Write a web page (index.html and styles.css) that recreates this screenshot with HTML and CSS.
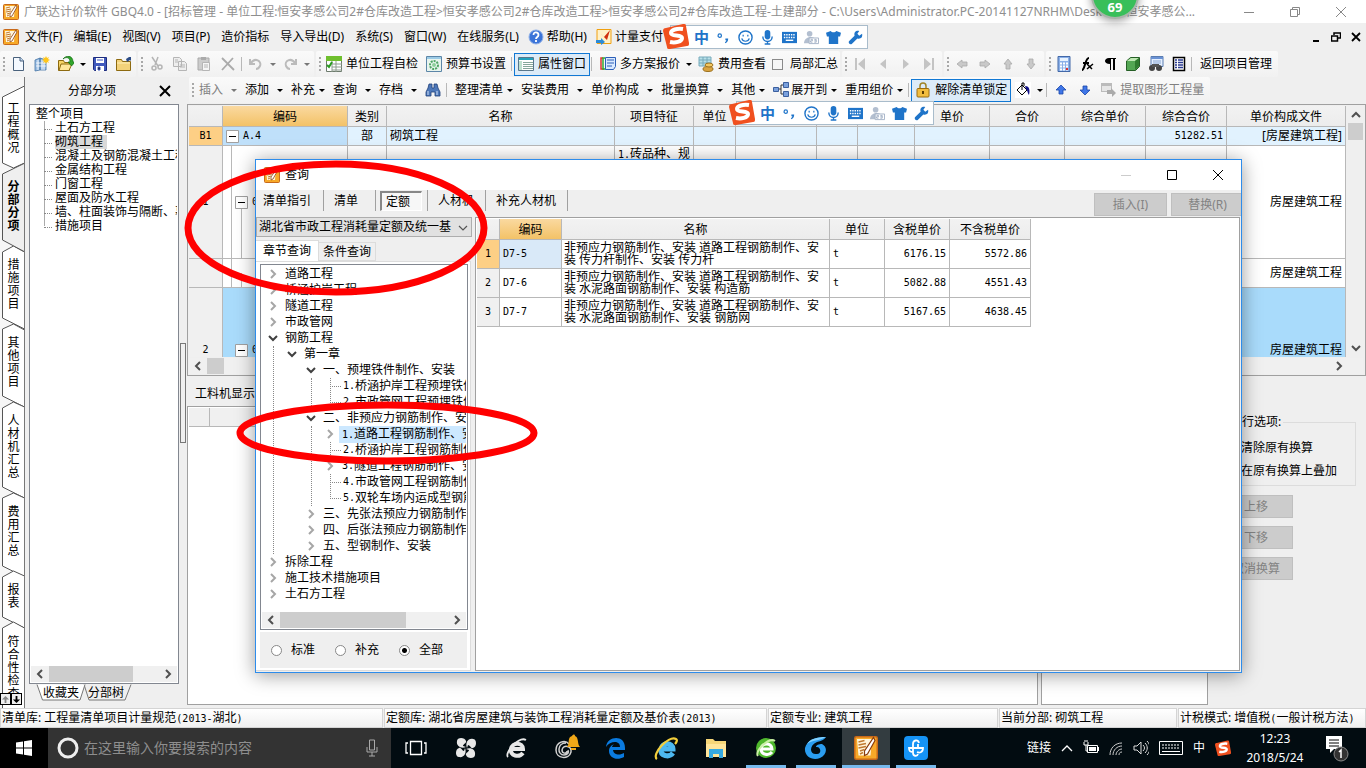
FILE: index.html
```html
<!DOCTYPE html>
<html lang="zh-CN">
<head>
<meta charset="utf-8">
<title>广联达计价软件 GBQ4.0</title>
<link rel="stylesheet" href="styles.css">
</head>
<body>
<svg class="defs" aria-hidden="true">
  <symbol id="app" viewBox="0 0 16 16"><rect x=".5" y=".5" width="15" height="15" rx="1" fill="#f7a928" stroke="#c8691a"/><path d="M2 2h10l-1 11H3z" fill="#fff6dc"/><path d="M3 4l4-1M3 6l5-1M3 8l5-1M4 10l3-1M4 12l2-1" fill="none" stroke="#c07a30"/><path d="M13 1l1 2-5 9-2 1 0-3z" fill="#fff" stroke="#8a3d0c" stroke-width=".8"/></symbol>
  <symbol id="doc" viewBox="0 0 16 16"><path d="M3.500 1.500h7l3 3v10h-10z" fill="#f4f9ff" stroke="#49617c"/><path d="M10 1v4h4" fill="#c5daf0" stroke="#49617c"/></symbol>
  <symbol id="build" viewBox="0 0 16 16"><path d="M1 4l5-2v12l-5 1zM6 2l6 2v10H6z" fill="#9cbfe4" stroke="#4574a5" stroke-width=".8"/><path d="M2 7h10M2 10h10M4 4v10M8 4v10M10 4v10" stroke="#fff" stroke-width=".8"/><path d="M12 0l1 2 2-1-1 2 2 1-2 1 1 2-2-1-1 2-1-2-2 1 1-2-2-1 2-1-1-2 2 1z" fill="#ffc61a"/></symbol>
  <symbol id="open" viewBox="0 0 16 16"><path d="M0.500 4.500h5l1 2h5v8h-11z" fill="#f6d365" stroke="#8d6a10"/><path d="M3 8h11l-3 6.500H1z" fill="#ffe79a" stroke="#8d6a10"/><path d="M5 3c4-3 7-1 7 3h-2l3.500 4L17 6h-2C15-1 8-1 5 3z" fill="#31a52c" stroke="#116a12" stroke-width=".7"/></symbol>
  <symbol id="save" viewBox="0 0 16 16"><path d="M1.500 1.500h13v13h-12l-1-1z" fill="#4059bd" stroke="#1d2c7f"/><path d="M4 2h8v5H4zM4 10h8v5H4z" fill="#fff"/><path d="M5 4h6M6 11h2v3H6z" stroke="#4059bd"/></symbol>
  <symbol id="folder" viewBox="0 0 16 16"><path d="M.5 3.500h5l1 2h8v9H.5z" fill="#f3d27a" stroke="#8d6a10"/><path d="M1 7h13" stroke="#fff0b8"/><path d="M10 3l3-2h2v4l-1-1-3 2z" fill="#2c4c86"/></symbol>
  <symbol id="cut" viewBox="0 0 16 16"><path d="M4 1l6 9M10 1L7 9" stroke="#b5b5b5" stroke-width="1.500"/><circle cx="6" cy="12" r="2" fill="none" stroke="#b5b5b5" stroke-width="1.500"/><circle cx="12" cy="11" r="2" fill="none" stroke="#b5b5b5" stroke-width="1.500"/></symbol>
  <symbol id="copy" viewBox="0 0 16 16"><path d="M1.500 1.500h6l2 2v7h-8zM6.500 5.500h6l2 2v7h-8z" fill="#eee" stroke="#b5b5b5"/><path d="M8 9h5M8 11h5M3 4h3M3 6h3" stroke="#b5b5b5"/></symbol>
  <symbol id="paste" viewBox="0 0 16 16"><path d="M2 2h11v12H2z" fill="#ccc" stroke="#aaa"/><path d="M5 1h5v3H5z" fill="#aaa"/><path d="M6.500 6.500h7v8h-7z" fill="#f5f5f5" stroke="#b5b5b5"/><path d="M8 9h4M8 11h4" stroke="#b5b5b5"/></symbol>
  <symbol id="del" viewBox="0 0 16 16"><path d="M2 2l12 12M13 2L2 14" stroke="#aaa" stroke-width="1.800"/></symbol>
  <symbol id="undo" viewBox="0 0 16 16"><path d="M2 3v5h5M3 7c4-6 11-2 9 3-1 2-3 3-4 3" fill="none" stroke="#bbb" stroke-width="2"/></symbol>
  <symbol id="table" viewBox="0 0 16 16"><path d="M.5 .5h15v15H.5z" fill="#fff" stroke="#6d7b6d"/><path d="M0 0h16v5H0z" fill="#6fbf2e"/><path d="M6 8h10M6 11h10M6 14h10M10 5v11M6 5v11" stroke="#8e9b8e"/><path d="M1 9l2 2 3-5" fill="none" stroke="#2a9a20" stroke-width="2"/></symbol>
  <symbol id="gear" viewBox="0 0 16 16"><path d="M.5 .5h15v15H.5z" fill="#e8f4ee" stroke="#5c86a8"/><path d="M1 1h14v2H1z" fill="#9ccbe6"/><circle cx="8" cy="9" r="4" fill="none" stroke="#4fa564" stroke-width="2" stroke-dasharray="2 1"/><circle cx="8" cy="9" r="2" fill="#8fd09c"/></symbol>
  <symbol id="prop" viewBox="0 0 16 16"><path d="M.5 1.500h15v13H.5z" fill="#fff" stroke="#59778c"/><path d="M1 2h14v2H1z" fill="#22a1bd"/><path d="M1 5h3v9H1z" fill="#bfe0cf"/><path d="M5 6.500h10M5 8.500h10M5 10.500h10M5 12.500h10" stroke="#86a79b"/></symbol>
  <symbol id="multi" viewBox="0 0 16 16"><path d="M3 2H1v11h3" fill="none" stroke="#d33" stroke-width="1.500"/><path d="M5 2H3v11h3" fill="none" stroke="#3a3" stroke-width="1.500"/><path d="M5.500 1.500h10v9l-2 3h-8z" fill="#d9e9ff" stroke="#2b5fb8"/><path d="M7 4h7M7 7h7M7 10h5" stroke="#2b5fb8"/></symbol>
  <symbol id="fee" viewBox="0 0 16 16"><path d="M1 1h12v9H1z" fill="#b8e0e8" stroke="#7ab"/><path d="M1 4h12M1 7h12M5 1v9M9 1v9" stroke="#7ab"/><ellipse cx="10" cy="13" rx="5" ry="2.500" fill="#d9a441" stroke="#9a6f1c"/><ellipse cx="11" cy="9" rx="4" ry="2" fill="#f2c762" stroke="#9a6f1c"/></symbol>
  <symbol id="first" viewBox="0 0 16 16"><path d="M3 2h2v12H3zM13 2v12L6 8z" fill="#c4c4c4"/></symbol>
  <symbol id="prev" viewBox="0 0 16 16"><path d="M11 3v10L5 8z" fill="#c4c4c4"/></symbol>
  <symbol id="arr" viewBox="0 0 16 16"><path d="M3 8l5-4v2h5v4H8v2z" fill="#c9c9c9" stroke="#aaa" stroke-width=".8"/></symbol>
  <symbol id="barr" viewBox="0 0 16 16"><path d="M8 3l5 5h-3v4H6V8H3z" fill="#3f76e8" stroke="#1b46a8" stroke-width=".8"/></symbol>
  <symbol id="calc" viewBox="0 0 16 16"><path d="M2 .5h12v15H2z" fill="#8bb0e8" stroke="#4268a8"/><path d="M4 2h8v3H4z" fill="#e8f3ff"/><path d="M4 7.500h8M4 10.500h8M4 13.500h8" stroke="#fff" stroke-width="2" stroke-dasharray="2 1"/><path d="M10 13h2" stroke="#d33" stroke-width="2"/></symbol>
  <symbol id="fx" viewBox="0 0 16 16"><path d="M3 14c3 0 3-12 7-12M4 7h6" fill="none" stroke="#000" stroke-width="2"/><path d="M8 8l5 5M14 8l-6 5" fill="none" stroke="#000" stroke-width="1.500"/></symbol>
  <symbol id="para" viewBox="0 0 16 16"><path d="M8 8C1 8 2 2 7 2h7v1h-1v11h-2V3H9v11H8z" fill="#000"/></symbol>
  <symbol id="cube" viewBox="0 0 16 16"><path d="M1.500 5l4-3.500h9v9l-4 4h-9z" fill="#53a653" stroke="#265f26"/><path d="M2 5l4-3h8l-4 3z" fill="#bfe8b4"/><path d="M10 5l4-3v8l-4 4z" fill="#2f7b2f"/></symbol>
  <symbol id="find" viewBox="0 0 16 16"><path d="M3 .5h12v10H3z" fill="#e4efff" stroke="#5a7cb0"/><path d="M3 1h12v2H3z" fill="#6a92d4"/><path d="M5 5h8M5 7h8" stroke="#8aa6d0"/><circle cx="4" cy="12" r="3" fill="#444"/><circle cx="11" cy="12" r="3" fill="#444"/><path d="M4 8h7v3H4z" fill="#555"/></symbol>
  <symbol id="list" viewBox="0 0 16 16"><path d="M2.500 1.500h11v13h-11z" fill="#fff" stroke="#000" stroke-width="1.500"/><path d="M4 4h2M7 4h5M4 6.500h2M7 6.500h5M4 9h2M7 9h5M4 11.500h2M7 11.500h5" stroke="#2a3a90" stroke-width="1.300"/></symbol>
  <symbol id="bino" viewBox="0 0 16 16"><path d="M4 2h3v4h2V2h3l1 4 2 4v4h-5v-4H6v4H1v-4l2-4z" fill="#4c77b8" stroke="#1f3f78" stroke-width=".8"/><path d="M3 9v4M12 9v4" stroke="#cfe0f8"/></symbol>
  <symbol id="expand" viewBox="0 0 16 16"><path d="M.5 5.500h5v4h-5zM10.500 .5h5v5h-5zM10.500 9.500h5v5h-5z" fill="#7aa0dc" stroke="#3b5f9e"/><path d="M6 7h2M10 3H8v9h2" fill="none" stroke="#333"/></symbol>
  <symbol id="lock" viewBox="0 0 16 16"><path d="M5 7V4c0-4 6-4 6 0v3" fill="none" stroke="#a08428" stroke-width="1.500"/><rect x="2" y="6.500" width="12" height="8.500" rx="1" fill="#f2bd3e" stroke="#9a6c10"/><path d="M8 9v3" stroke="#5a3c00" stroke-width="2"/></symbol>
  <symbol id="bucket" viewBox="0 0 16 16"><path d="M0 0h16v16H0z" fill="#fff"/><path d="M7 3l5 5-5 5-5-5z" fill="#fff" stroke="#000"/><path d="M7 8V1h2v3" fill="none" stroke="#000"/><path d="M10 4c5 0 5 5 4 9-2-3-1-4-3-6z" fill="#14148c"/></symbol>
  <symbol id="extract" viewBox="0 0 16 16"><path d="M0 1h11v9H0z" fill="#bbb"/><path d="M1 4h9v5H1z" fill="#e6e6e6"/><path d="M6 8h4V6l5 5-4 4v-3H6z" fill="#aaa"/></symbol>
  <symbol id="sogou" viewBox="0 0 26 26"><path d="M3 5l17-4c2 0 3 0 3 2l3 17c0 2 0 3-2 3L7 26c-2 0-3 0-3-2L0 8c0-2 1-3 3-3z" fill="#f0501f"/><path d="M20 6c-6-1-12 1-12 4 0 4 11 1 11 5 0 4-7 5-12 4" fill="none" stroke="#fff" stroke-width="4"/></symbol>
  <symbol id="punc" viewBox="0 0 16 16"><circle cx="4" cy="6" r="1.800" fill="none" stroke="#1f74c9" stroke-width="1.300"/><path d="M10 9h3c0 3-1 4-3 5l-.5-1c1-.5 1.500-1 1.500-2h-1z" fill="#1f74c9"/></symbol>
  <symbol id="smile" viewBox="0 0 16 16"><circle cx="8" cy="8" r="7" fill="none" stroke="#1f74c9" stroke-width="1.500"/><path d="M5.500 5v2M10.500 5v2M4 9c1 4 7 4 8 0" fill="none" stroke="#1f74c9" stroke-width="1.300"/></symbol>
  <symbol id="mic" viewBox="0 0 16 16"><rect x="5" y="0" width="6" height="10" rx="3" fill="#1f74c9"/><path d="M3 7c0 7 10 7 10 0M8 12v3M5 15h6" fill="none" stroke="#1f74c9" stroke-width="1.500"/></symbol>
  <symbol id="kb" viewBox="0 0 16 16"><path d="M0 2h16v12H0z" fill="#1f74c9"/><path d="M2 5h12M2 8h12" stroke="#fff" stroke-width="1.500" stroke-dasharray="1.500 1"/><path d="M4 11h8" stroke="#fff" stroke-width="1.500"/></symbol>
  <symbol id="person" viewBox="0 0 16 16"><circle cx="6" cy="4" r="3" fill="#b3bfd0"/><path d="M0 14c0-8 12-8 12-4v4z" fill="#b3bfd0"/><path d="M5.500 8.500h10v6h-10z" fill="#fff" stroke="#a4b2c6"/><path d="M7 10h2v1.500H7V13h2M11 10h2v3h-2M11 11.500h2" fill="none" stroke="#8e9fb8" stroke-width=".8"/></symbol>
  <symbol id="shirt" viewBox="0 0 16 16"><path d="M5 1c1 2 5 2 6 0l5 2-1 4h-2v8H3V7H1L0 3z" fill="#1f74c9"/></symbol>
  <symbol id="wrench" viewBox="0 0 16 16"><path d="M1 12l6-6c-1-4 2-6 5-5L10 4l2 2 3-2c1 4-2 6-5 5l-6 6c-2 1-4-1-3-3z" fill="#1f74c9"/></symbol>
  <symbol id="minus" viewBox="0 0 13 13"><path d="M.5 .5h12v12H.5z" fill="#fff" stroke="#a0a0a0"/><path d="M3 6.500h7" stroke="#000"/></symbol>
  <symbol id="cl" viewBox="0 0 8 10"><path d="M6 1L2 5l4 4" fill="none" stroke="#505050" stroke-width="2"/></symbol>
  <symbol id="cr" viewBox="0 0 8 10"><path d="M2 1l4 4-4 4" fill="none" stroke="currentColor" stroke-width="2"/></symbol>
  <symbol id="cd" viewBox="0 0 10 8"><path d="M1 2l4 4 4-4" fill="none" stroke="currentColor" stroke-width="2"/></symbol>
  <symbol id="cthin" viewBox="0 0 10 8"><path d="M1 2l4 4 4-4" fill="none" stroke="#555" stroke-width="1.200"/></symbol>
</svg>

<div class="desktop">
<header class="titlebar">
  <svg class="i"><use href="#app"/></svg>
  <h1>广联达计价软件 GBQ4.0 - [招标管理 - 单位工程:恒安孝感公司2#仓库改造工程&gt;恒安孝感公司2#仓库改造工程&gt;恒安孝感公司2#仓库改造工程-土建部分 - C:\Users\Administrator.PC-20141127NRHM\Desktop\恒安孝感公...</h1>
  <div class="winbtns">
    <button aria-label="最小化"><svg viewBox="0 0 10 10"><path d="M0 5.500h10" stroke="#888"/></svg></button>
    <button aria-label="还原"><svg viewBox="0 0 10 10"><path d="M.5 2.500h7v7h-7zM2.500 2V.5h7v7H8" fill="none" stroke="#888"/></svg></button>
    <button aria-label="关闭"><svg viewBox="0 0 10 10"><path d="M0 0l10 10M10 0L0 10" stroke="#888"/></svg></button>
  </div>
</header>

<nav class="menubar">
  <svg class="i"><use href="#app"/></svg>
  <button>文件(F)</button><button>编辑(E)</button><button>视图(V)</button><button>项目(P)</button><button>造价指标</button><button>导入导出(D)</button><button>系统(S)</button><button>窗口(W)</button><button>在线服务(L)</button>
  <button class="with-i"><svg class="i" viewBox="0 0 16 16"><circle cx="8" cy="8" r="7" fill="#3b74d8" stroke="#8fb0e8"/><path d="M5.500 6c0-4 5-3 5 0 0 2-2.500 2-2.500 4M8 11v2" fill="none" stroke="#fff" stroke-width="1.800"/></svg>帮助(H)</button>
  <button class="with-i"><svg class="i" viewBox="0 0 16 16"><path d="M1 .5h14v14H1z" fill="#fff1c8" stroke="#f0a010"/><path d="M4 4l4 4 6-7-3 10z" fill="#d03010"/><path d="M0 11h5V9l4 4-4 3v-2H0z" fill="#2b8bd8"/></svg>计量支付</button>
  <div class="mdi">
    <button aria-label="最小化窗口"><svg viewBox="0 0 10 10"><path d="M2 9h6" stroke="#000" stroke-width="2"/></svg></button>
    <button aria-label="还原窗口"><svg viewBox="0 0 10 10"><path d="M.5 4h6v5h-6zM3 3V1h6.500v5H7" fill="none" stroke="#000" stroke-width="1.500"/></svg></button>
    <button aria-label="关闭窗口"><svg viewBox="0 0 10 10"><path d="M1 1l8 8M9 1L1 9" stroke="#000" stroke-width="1.800"/></svg></button>
  </div>
</nav>

<div class="toolrow">
  <div class="group flush"><i class="grip"></i>
    <button class="ib" aria-label="新建"><svg class="i"><use href="#doc"/></svg></button>
    <button class="ib" aria-label="新建项目"><svg class="i"><use href="#build"/></svg></button>
    <button class="ib" aria-label="打开"><svg class="i"><use href="#open"/></svg></button>
    <button class="dd" aria-label="打开选项"></button>
    <button class="ib" aria-label="保存"><svg class="i"><use href="#save"/></svg></button>
    <button class="ib" aria-label="目录"><svg class="i"><use href="#folder"/></svg></button>
  </div>
  <div class="group"><i class="grip"></i>
    <button class="ib" aria-label="剪切"><svg class="i"><use href="#cut"/></svg></button>
    <button class="ib" aria-label="复制"><svg class="i"><use href="#copy"/></svg></button>
    <button class="ib" aria-label="粘贴"><svg class="i"><use href="#paste"/></svg></button>
    <button class="ib" aria-label="删除"><svg class="i"><use href="#del"/></svg></button>
    <i class="sep"></i>
    <button class="ib" aria-label="撤销"><svg class="i"><use href="#undo"/></svg></button>
    <button class="dd dim" aria-label="撤销选项"></button>
    <button class="ib" aria-label="重做"><svg class="i flip"><use href="#undo"/></svg></button>
    <button class="dd dim" aria-label="重做选项"></button>
  </div>
  <div class="group flush"><i class="grip"></i>
    <button class="tb"><svg class="i"><use href="#table"/></svg>单位工程自检</button>
    <button class="tb"><svg class="i"><use href="#gear"/></svg>预算书设置</button>
    <i class="sep"></i>
    <button class="tb on"><svg class="i"><use href="#prop"/></svg>属性窗口</button>
    <i class="sep wide"></i>
    <button class="tb"><svg class="i"><use href="#multi"/></svg>多方案报价</button>
    <button class="dd" aria-label="报价选项"></button>
    <button class="tb"><svg class="i"><use href="#fee"/></svg>费用查看</button>
    <label class="check"><input type="checkbox">局部汇总</label>
  </div>
  <div class="group narrow"><i class="grip"></i>
    <button class="ib" aria-label="首条"><svg class="i"><use href="#first"/></svg></button>
    <button class="ib" aria-label="上一条"><svg class="i"><use href="#prev"/></svg></button>
    <button class="ib" aria-label="下一条"><svg class="i flip"><use href="#prev"/></svg></button>
    <button class="ib" aria-label="末条"><svg class="i flip"><use href="#first"/></svg></button>
  </div>
  <div class="group narrow"><i class="grip"></i>
    <button class="ib" aria-label="左移"><svg class="i"><use href="#arr"/></svg></button>
    <button class="ib" aria-label="右移"><svg class="i flip"><use href="#arr"/></svg></button>
    <button class="ib" aria-label="上升"><svg class="i r90"><use href="#arr"/></svg></button>
    <button class="ib" aria-label="下降"><svg class="i r270"><use href="#arr"/></svg></button>
  </div>
  <div class="group narrow"><i class="grip"></i>
    <button class="ib" aria-label="计算器"><svg class="i"><use href="#calc"/></svg></button>
    <button class="ib" aria-label="函数"><svg class="i"><use href="#fx"/></svg></button>
    <button class="ib" aria-label="特殊符号"><svg class="i"><use href="#para"/></svg></button>
    <button class="ib" aria-label="图元"><svg class="i"><use href="#cube"/></svg></button>
    <button class="ib" aria-label="查看"><svg class="i"><use href="#find"/></svg></button>
    <button class="ib" aria-label="列表"><svg class="i"><use href="#list"/></svg></button>
    <i class="sep wide"></i>
    <button class="tb">返回项目管理</button>
  </div>
</div>

<div class="main">
  <nav class="sidetabs">
    <svg class="outline" viewBox="0 0 25 631"><g fill="#fff" stroke="#555"><path d="M24.500 9L2.500 20v66l11 5 11-5z"/><path d="M13.500 169l-11 6v66l22 11V175z"/><path d="M13.500 247l-11 5v67l22 11V253z"/><path d="M13.500 325l-11 6v79l22 11V330z"/><path d="M13.500 416l-11 5v68l22 11V421z"/><path d="M13.500 494l-11 6v40l22 11V499z"/><path d="M13.500 545l-11 6v85h22v-85z"/></g><path d="M25 86L2.500 97v66L25 175z" fill="#efefef"/><path d="M25 86L2.500 97v66L25 175" fill="none" stroke="#555"/></svg>
    <button>工程概况</button><button class="sel">分部分项</button><button>措施项目</button><button>其他项目</button><button>人材机汇总</button><button>费用汇总</button><button>报表</button><button>符合性检查</button>
    <div class="spin"><button aria-label="向上滚动"><svg viewBox="0 0 10 10"><path d="M5 1l4 4H6v4H4V5H1z" fill="#888"/></svg></button><button aria-label="向下滚动"><svg viewBox="0 0 10 10"><path d="M5 9l4-4H6V1H4v4H1z" fill="#000"/></svg></button></div>
  </nav>

  <aside class="treepane">
    <div class="panehead"><h2>分部分项</h2><button aria-label="关闭面板"><svg viewBox="0 0 12 12"><path d="M1 1l10 10M11 1L1 11" stroke="#000" stroke-width="2"/></svg></button></div>
    <div class="treebox">
      <div class="tree">
        <div>整个项目</div>
        <ul><li>土石方工程</li><li><b>砌筑工程</b></li><li>混凝土及钢筋混凝土工程</li><li>金属结构工程</li><li>门窗工程</li><li>屋面及防水工程</li><li>墙、柱面装饰与隔断、幕墙工程</li><li>措施项目</li></ul>
      </div>
      <div class="hscroll"><svg><use href="#cl"/></svg><i class="t84"></i><svg><use href="#cr"/></svg></div>
    </div>
    <div class="foottabs"><svg viewBox="0 0 110 17"><path d="M55 .5l5 15.500h36L102 .5" fill="#efefef" stroke="#777"/><path d="M8 .5L13.500 16H51L56 .5" fill="#fff" stroke="#777"/></svg><button>收藏夹</button><button>分部树</button></div>
  </aside>

  <div class="splitter"><i></i></div>

  <section class="work">
    <div class="toolrow">
      <div class="group"><i class="grip"></i>
        <button class="td dim">插入</button><button class="td">添加</button><button class="td tight">补充</button><button class="td">查询</button><button class="td">存档</button>
        <button class="ib" aria-label="查找"><svg class="i"><use href="#bino"/></svg></button>
        <i class="sep wide"></i>
        <button class="td tight">整理清单</button><button class="td">安装费用</button><button class="td">单价构成</button><button class="td">批量换算</button><button class="td tight">其他</button>
        <button class="td tight"><svg class="i"><use href="#expand"/></svg>展开到</button><button class="td tight">重用组价</button>
        <i class="sep"></i>
        <button class="tb on"><svg class="i"><use href="#lock"/></svg>解除清单锁定</button>
        <button class="ib" aria-label="填充颜色"><svg class="i"><use href="#bucket"/></svg></button><button class="dd" aria-label="颜色选项"></button>
        <i class="sep"></i>
        <button class="ib" aria-label="上移一行"><svg class="i"><use href="#barr"/></svg></button>
        <button class="ib" aria-label="下移一行"><svg class="i r180"><use href="#barr"/></svg></button>
        <button class="tb last dim"><svg class="i"><use href="#extract"/></svg>提取图形工程量</button>
      </div>
    </div>

    <div class="gridbox">
      <div class="gridview">
        <table class="grid">
          <colgroup><col class="w34"><col class="w125"><col class="w39"><col class="w228"><col class="w79"><col class="w42"><col class="w81"><col class="w41"><col class="w57"><col class="w75"><col class="w75"><col class="w81"><col class="w81"><col></colgroup>
          <thead><tr><th></th><th class="hot">编码</th><th>类别</th><th>名称</th><th>项目特征</th><th>单位</th><th></th><th></th><th></th><th>单价</th><th>合价</th><th>综合单价</th><th>综合合价</th><th>单价构成文件</th></tr></thead>
          <tbody>
            <tr class="r19 lite"><th class="n hot2">B1</th><td class="n cell-sel"><svg class="m"><use href="#minus"/></svg>A.4</td><td class="c">部</td><td>砌筑工程</td><td></td><td></td><td></td><td></td><td></td><td></td><td></td><td></td><td class="n r">51282.51</td><td class="r">[房屋建筑工程]</td></tr>
            <tr class="r113"><th class="n">1</th><td class="n sub"><svg class="m"><use href="#minus"/></svg>0</td><td></td><td></td><td class="top"><span class="n">1.</span>砖品种、规</td><td></td><td></td><td></td><td></td><td></td><td></td><td></td><td></td><td class="r">房屋建筑工程</td></tr>
            <tr class="r29"><th></th><td class="sub"></td><td></td><td></td><td></td><td></td><td></td><td></td><td></td><td></td><td></td><td></td><td></td><td class="r">房屋建筑工程</td></tr>
            <tr class="r69 blue"><th class="n">2</th><td class="n sub2"><svg class="m"><use href="#minus"/></svg>0</td><td></td><td></td><td></td><td></td><td></td><td></td><td></td><td></td><td></td><td></td><td></td><td class="r">房屋建筑工程</td></tr>
          </tbody>
        </table>
        <div class="vscroll"><svg class="up"><use href="#cd"/></svg><i></i><svg><use href="#cd"/></svg></div>
      </div>
      <div class="hscroll"><svg><use href="#cl"/></svg><i class="t17"></i><svg><use href="#cr"/></svg></div>
    </div>

    <div class="lower">
      <div class="lowleft"><h2>工料机显示</h2><div class="resbox"><div class="reshead"><i></i></div></div></div>
      <div class="lowmid"></div>
      <form class="opts">
        <fieldset><legend>执行选项:</legend>
          <label><input type="radio" name="run">清除原有换算</label>
          <label><input type="radio" name="run">在原有换算上叠加</label>
        </fieldset>
        <button type="button" disabled>上移</button><button type="button" disabled>下移</button><button type="button" disabled>取消换算</button>
      </form>
    </div>
  </section>
</div>

<footer class="status">
  <span class="s383">清单库: 工程量清单项目计量规范<span class="n">(2013-</span>湖北<span class="n">)</span></span>
  <span class="s383">定额库: 湖北省房屋建筑与装饰工程消耗量定额及基价表<span class="n">(2013)</span></span>
  <span class="s230">定额专业: 建筑工程</span>
  <span class="s178">当前分部: 砌筑工程</span>
  <span class="rest">计税模式: 增值税<span class="n">(</span>一般计税方法<span class="n">)</span></span>
</footer>

<div class="taskbar">
  <button class="start" aria-label="开始"><svg viewBox="0 0 16 16"><path d="M0 2.500l7-1V7.500H0zM8 1.300L16 0v7.500H8zM0 8.500h7v6l-7-1zM8 8.500h8V16l-8-1.300z" fill="#fff"/></svg></button>
  <label class="search"><svg class="ring" viewBox="0 0 22 22"><circle cx="11" cy="11" r="9" fill="none" stroke="#eee" stroke-width="3"/></svg><input type="text" placeholder="在这里输入你要搜索的内容" aria-label="搜索"><svg class="smic" viewBox="0 0 12 18"><path d="M3.500 1h5v10h-5zM1 8v5h10V8M6 13v4M3 17h6" fill="none" stroke="#aaa"/></svg></label>
  <button aria-label="任务视图"><svg viewBox="0 0 24 24"><path d="M6.500 5.500h11v13h-11zM4 7H2v10h2M20 7h2v10h-2" fill="none" stroke="#fff" stroke-width="1.300"/></svg></button>
  <button aria-label="花瓣"><svg viewBox="0 0 24 24"><path d="M12 11C7 13 2 10 3 5c0-4 8-4 9 0 1 2-3 3-3 5M13 12c-2-5 1-10 6-9 4 0 4 8 0 9-2 1-3-3-5-3M12 13c5-2 10 1 9 6 0 4-8 4-9 0-1-2 3-3 3-5M11 12c2 5-1 10-6 9-4 0-4-8 0-9 2-1 3 3 5 3" fill="#e8e8e8"/></svg></button>
  <button aria-label="浏览器"><svg viewBox="0 0 24 24"><path d="M19 17c-4 5-13 3-12-4 1-7 12-7 12 0H8" fill="none" stroke="#e8e8e8" stroke-width="4"/><path d="M4 21C0 17 15 0 22 4" fill="none" stroke="#e8e8e8" stroke-width="1.800"/></svg></button>
  <button aria-label="提醒"><svg class="w28" viewBox="0 0 28 28"><path d="M17 10c-4-5-13-2-13 6 0 9 13 10 15 2 1-6-8-8-9-2 0 4 5 4 5 1M14 9c-9 0-9 12-2 12 4 0 5-3 4-5" fill="none" stroke="#d0d0d0" stroke-width="1.500"/><path d="M15 13c3-3 0-10 5-11 1-2 3-2 3 0 4 1 2 8 5 11zM19 14h5v2h-5z" fill="#f0a818"/></svg></button>
  <button aria-label="Edge"><svg viewBox="0 0 24 24"><path d="M2 11C3 0 21-2 21 12v2H9c1 6 8 5 11 3v4C13 25 5 22 5 15c0-4 3-6 5-7-2 2-2 3-2 3h8c0-7-10-6-14 0z" fill="#0a7be0"/></svg></button>
  <button aria-label="Internet Explorer"><svg viewBox="0 0 24 24"><path d="M19 17c-4 5-13 3-12-4 1-7 12-7 12 0H8" fill="none" stroke="#4db8f0" stroke-width="5"/><path d="M3 23C-3 19 14-1 22 3c2 1 0 4-1 5" fill="none" stroke="#f3cf3c" stroke-width="2.200"/></svg></button>
  <button aria-label="文件资源管理器"><svg viewBox="0 0 24 24"><path d="M2 3h7l2 2h11v16H2z" fill="#f6d678"/><path d="M2 8h20v13H2z" fill="#ffe59a"/><path d="M5 13h14v9h-4v-4H9v4H5z" fill="#36a9e0"/></svg></button>
  <button class="run" aria-label="安全浏览器"><svg viewBox="0 0 24 24"><circle cx="12" cy="12" r="10" fill="#4fb82d"/><path d="M18 16c-3 4-11 3-11-3s11-7 11 0H8" fill="none" stroke="#fff" stroke-width="3"/><path d="M4 20C0 15 15 1 21 5" fill="none" stroke="#c9f0a4" stroke-width="2"/></svg></button>
  <button class="run" aria-label="广联达"><svg viewBox="0 0 24 24"><path d="M22 1C12 1 3 4 1 12c-1 9 8 13 15 10 7-3 8-11 2-14-3 0-6 1-6 3 5-1 6 7 1 7-8 1-8-9 0-12 4-1 7-2 9-5z" fill="#2a9df0"/><path d="M22 1C12 1 6 3 3 8c5-4 12-3 19-7z" fill="#7fd0ff"/></svg></button>
  <button class="run active" aria-label="计价软件"><svg><use href="#app"/></svg></button>
  <button class="run" aria-label="云助手"><svg viewBox="0 0 24 24"><rect width="24" height="24" rx="4" fill="#1593f5"/><path d="M15 7c-1-4-6-3-6 1v9c0 3 4 4 5 1M9 12H5c0 4 2 4 4 4M7 12h12c0 5-4 5-6 4M14 8v4" fill="none" stroke="#fff" stroke-width="1.800"/></svg></button>
  <div class="tray">
    <span>链接</span>
    <svg viewBox="0 0 12 16"><path d="M1 11l5-5 5 5" fill="none" stroke="#fff" stroke-width="1.300"/></svg>
    <svg class="w16" viewBox="0 0 16 16"><path d="M4.500 5.500h10v7h-10zM15.500 7v4M1 2v3h4V2M3 5v6h2M2 0v2M4 0v2" fill="none" stroke="#fff"/><path d="M6 7h7v4H6z" fill="#fff"/></svg>
    <svg class="w14" viewBox="0 0 14 16"><path d="M1 15C1 8 6 3 13 3M4 15c0-5 4-9 9-9M7 15c0-3 3-6 6-6M10 15c0-2 1-3 3-3" fill="none" stroke="#ccc"/></svg>
    <svg class="w16" viewBox="0 0 16 16"><path d="M1 6h3l4-4v12l-4-4H1zM10 5c2 2 2 4 0 6M12 3c3 3 3 7 0 10M14 1c4 4 4 10 0 14" fill="none" stroke="#ddd"/></svg>
    <svg class="w24" viewBox="0 0 24 14"><path d="M.5 .5h23v13H.5z" fill="none" stroke="#fff"/><path d="M3 4h18M3 7h18" stroke="#fff" stroke-dasharray="2 1"/><path d="M3 10.500h18" stroke="#fff"/></svg>
    <span>中</span>
    <svg class="w16" viewBox="0 0 26 26"><use href="#sogou"/></svg>
    <time>12:23<br>2018/5/24</time>
    <svg class="note" viewBox="0 0 24 30"><path d="M1 3h16v13h-8l-4 4v-4H1z" fill="#fff"/><path d="M4 7h10M4 10h10M4 13h10" stroke="#000"/><circle cx="16" cy="21" r="7" fill="#333" stroke="#888"/><path d="M14 19l2-2v8" fill="none" stroke="#fff" stroke-width="1.500"/></svg>
  </div>
</div>

<section class="dialog" role="dialog" aria-label="查询">
  <div class="dtitle"><svg class="i"><use href="#app"/></svg><h2>查询</h2>
    <div class="winbtns">
      <button aria-label="最小化查询"><svg viewBox="0 0 10 10"><path d="M0 5.500h10" stroke="#ccc"/></svg></button>
      <button aria-label="最大化查询"><svg viewBox="0 0 10 10"><path d="M.5 .5h9v9h-9z" fill="none" stroke="#000"/></svg></button>
      <button aria-label="关闭查询"><svg viewBox="0 0 10 10"><path d="M0 0l10 10M10 0L0 10" stroke="#000"/></svg></button>
    </div>
  </div>
  <div class="dtools">
    <button class="dt">清单指引</button><button class="dt">清单</button><button class="dt"><span class="pressed">定额</span></button><button class="dt">人材机</button><button class="dt">补充人材机</button>
    <div class="dact"><button disabled>插入(I)</button><button disabled>替换(R)</button></div>
  </div>
  <div class="dbody">
    <div class="dleft">
      <div class="combo"><select aria-label="定额库"><option>湖北省市政工程消耗量定额及统一基</option></select><svg><use href="#cthin"/></svg></div>
      <div class="dtabs"><button class="sel">章节查询</button><button>条件查询</button></div>
      <div class="dpane">
        <div class="dtreebox">
          <ul class="dtree">
            <li><div><svg class="sh"><use href="#cr"/></svg>道路工程</div></li>
            <li><div><svg class="sh"><use href="#cr"/></svg>桥涵护岸工程</div></li>
            <li><div><svg class="sh"><use href="#cr"/></svg>隧道工程</div></li>
            <li><div><svg class="sh"><use href="#cr"/></svg>市政管网</div></li>
            <li><div><svg class="op"><use href="#cd"/></svg>钢筋工程</div>
              <ul><li><div><svg class="op"><use href="#cd"/></svg>第一章</div>
                <ul>
                  <li><div><svg class="op"><use href="#cd"/></svg>一、预埋铁件制作、安装</div>
                    <ul><li><div class="leaf more"><span class="n">1.</span>桥涵护岸工程预埋铁件</div></li><li><div class="leaf"><span class="n">2.</span>市政管网工程预埋铁件</div></li></ul></li>
                  <li><div><svg class="op"><use href="#cd"/></svg>二、非预应力钢筋制作、安装</div>
                    <ul>
                      <li><div><svg class="sh"><use href="#cr"/></svg><mark><span class="n">1.</span>道路工程钢筋制作、安装</mark></div></li>
                      <li><div class="leaf more"><span class="n">2.</span>桥涵护岸工程钢筋制作</div></li>
                      <li><div><svg class="sh"><use href="#cr"/></svg><span class="n">3.</span>隧道工程钢筋制作、安装</div></li>
                      <li><div class="leaf more"><span class="n">4.</span>市政管网工程钢筋制作</div></li>
                      <li><div class="leaf"><span class="n">5.</span>双轮车场内运成型钢筋</div></li>
                    </ul></li>
                  <li><div><svg class="sh"><use href="#cr"/></svg>三、先张法预应力钢筋制作</div></li>
                  <li><div><svg class="sh"><use href="#cr"/></svg>四、后张法预应力钢筋制作</div></li>
                  <li><div><svg class="sh"><use href="#cr"/></svg>五、型钢制作、安装</div></li>
                </ul></li></ul></li>
            <li><div><svg class="sh"><use href="#cr"/></svg>拆除工程</div></li>
            <li><div><svg class="sh"><use href="#cr"/></svg>施工技术措施项目</div></li>
            <li><div><svg class="sh"><use href="#cr"/></svg>土石方工程</div></li>
          </ul>
          <div class="hscroll"><svg><use href="#cl"/></svg><i class="t126"></i><svg><use href="#cr"/></svg></div>
        </div>
        <div class="radios"><label><input type="radio" name="kind">标准</label><label><input type="radio" name="kind">补充</label><label><input type="radio" name="kind" checked>全部</label></div>
      </div>
    </div>
    <div class="dright">
      <table class="grid quota">
        <colgroup><col class="w23"><col class="w62"><col class="w268"><col class="w55"><col class="w65"><col class="w81"></colgroup>
        <thead><tr><th></th><th class="hot">编码</th><th>名称</th><th>单位</th><th>含税单价</th><th>不含税单价</th></tr></thead>
        <tbody>
          <tr class="r29"><th class="n hot2">1</th><td class="n cell-cur">D7-5</td><td class="wrap">非预应力钢筋制作、安装 道路工程钢筋制作、安<br>装 传力杆制作、安装 传力杆</td><td class="n">t</td><td class="n r">6176.15</td><td class="n r">5572.86</td></tr>
          <tr class="r29"><th class="n">2</th><td class="n">D7-6</td><td class="wrap">非预应力钢筋制作、安装 道路工程钢筋制作、安<br>装 水泥路面钢筋制作、安装 构造筋</td><td class="n">t</td><td class="n r">5082.88</td><td class="n r">4551.43</td></tr>
          <tr class="r29"><th class="n">3</th><td class="n">D7-7</td><td class="wrap">非预应力钢筋制作、安装 道路工程钢筋制作、安<br>装 水泥路面钢筋制作、安装 钢筋网</td><td class="n">t</td><td class="n r">5167.65</td><td class="n r">4638.45</td></tr>
        </tbody>
      </table>
    </div>
  </div>
</section>

<div class="ime one"><svg class="logo"><use href="#sogou"/></svg><b>中</b><svg><use href="#punc"/></svg><svg><use href="#smile"/></svg><svg><use href="#mic"/></svg><svg><use href="#kb"/></svg><svg><use href="#person"/></svg><svg><use href="#shirt"/></svg><svg><use href="#wrench"/></svg></div>
<div class="ime two"><svg class="logo"><use href="#sogou"/></svg><b>中</b><svg><use href="#punc"/></svg><svg><use href="#smile"/></svg><svg><use href="#mic"/></svg><svg><use href="#kb"/></svg><svg><use href="#person"/></svg><svg><use href="#shirt"/></svg><svg><use href="#wrench"/></svg></div>
<div class="ball">69</div>
<svg class="marks" width="560" height="480" aria-hidden="true"><g fill="none" stroke="#f00" stroke-width="7"><ellipse cx="336" cy="228" rx="148" ry="64"/><ellipse cx="387" cy="433" rx="147" ry="28"/></g></svg>
</div>
</body>
</html>
```
FILE: styles.css
```css
* { box-sizing: border-box; }
body { margin: 0; font: 12px/16px "Noto Sans", "Noto Sans CJK SC", sans-serif; color: #000; }
button, input, select { font: inherit; color: inherit; }
button { border: 0; padding: 0; background: none; white-space: nowrap; }
h1, h2 { margin: 0; font-size: 12px; font-weight: 400; white-space: nowrap; }
ul { list-style: none; margin: 0; padding: 0; }
svg { display: block; flex: none; }
.defs { position: absolute; width: 0; height: 0; }
.i { width: 16px; height: 16px; }
.flip { transform: scaleX(-1); }
.r90 { transform: rotate(90deg); }
.r180 { transform: rotate(180deg); }
.r270 { transform: rotate(270deg); }
.n { font-family: "DejaVu Sans Mono", "Noto Sans CJK SC", monospace; font-size: 10px; }

.desktop { position: relative; display: flex; flex-direction: column; height: 100vh; overflow: hidden; background: #efefef; }

.titlebar { display: flex; align-items: center; height: 23px; padding-left: 3px; gap: 5px; background: #fff; color: #8e8e8e; flex: none; }
.winbtns { display: flex; margin-left: auto; }
.winbtns button { width: 46px; height: 20px; display: grid; place-items: center; }
.winbtns svg, .mdi svg { width: 10px; height: 10px; }
.titlebar .winbtns { margin-right: 2px; }

.menubar { display: flex; align-items: center; height: 28px; padding: 0 3px; gap: 11px; flex: none; }
.menubar > .i { margin-right: -5px; }
.with-i { display: flex; align-items: center; gap: 3px; margin-left: -2px; }
.mdi { display: flex; gap: 10px; margin-left: auto; padding-right: 2px; }

.toolrow { display: flex; height: 26px; flex: none; }
.group { display: flex; align-items: center; padding: 0 2px; margin-right: 2px; background: linear-gradient(#fafafa, #f1f1f1); border-radius: 2px; }
.group.flush { padding-right: 0; }
.grip { width: 4px; height: 15px; background: repeating-linear-gradient(#a8a8a8 0 2px, transparent 2px 4px) 1px 0 / 2px 100% no-repeat; }
.ib { width: 24px; height: 22px; display: grid; place-items: center; }
.narrow .ib { width: 23px; }
.dd { width: 10px; height: 22px; display: grid; place-items: center; }
.dd::after, .td::after { content: ""; border: 3px solid transparent; border-top-color: #000; border-bottom: 0; }
.dd.dim::after, .td.dim::after { border-top-color: #777; }
.sep { width: 4px; height: 14px; background: linear-gradient(#b8b8b8, #b8b8b8) 1px 0 / 1px 100% no-repeat; }
.sep.wide { width: 6px; }
.tb { display: flex; align-items: center; gap: 4px; height: 23px; padding: 0 4px; }
.tb.on { background: #dcebf8; outline: 1px solid #1178d4; outline-offset: -1px; }
.tb.last { gap: 3px; }
.dim { color: #808080; }
.td { display: flex; align-items: center; gap: 2px; padding: 0 4px; }
.td::after { margin: 0 0 0 6px; }
.td.tight::after { margin: 0 0 0 2px; }
.check { display: flex; align-items: center; gap: 7px; padding: 0 2px; }
.check input { appearance: none; width: 11px; height: 11px; margin: 0; border: 1px solid #8a8a8a; background: #f6f6f6; }

.main { display: flex; flex: 1; min-height: 0; }
.sidetabs { position: relative; width: 25px; padding-top: 13px; overflow: hidden; background: #f6f6f6; border-right: 1px solid #777; flex: none; }
.outline { position: absolute; left: 0; top: 0; width: 25px; height: 631px; }
.sidetabs > button { position: relative; display: block; width: 13px; margin-left: 7px; padding: 12px 0 14px; line-height: 13px; white-space: normal; word-break: break-all; }
.sidetabs .sel { font-weight: 700; }
.spin { position: absolute; left: 0; bottom: 3px; display: flex; background: #efefef; }
.spin button { width: 11px; height: 12px; border: 1px solid #000; }
.spin svg { width: 9px; height: 9px; }

.treepane { display: flex; flex-direction: column; width: 155px; padding: 0 1px 5px 4px; flex: none; }
.panehead { display: flex; align-items: center; justify-content: space-between; height: 27px; padding: 0 8px 0 39px; flex: none; }
.panehead svg { width: 12px; height: 12px; }
.treebox { display: flex; flex-direction: column; flex: 1; min-height: 0; border: 1px solid #828790; padding: 2px 1px 1px; background: #fff; }
.tree { flex: 1; min-height: 0; overflow: hidden; padding-left: 5px; line-height: 14px; white-space: nowrap; }
.tree > ul { margin-left: 8px; }
.tree li { display: flex; height: 14px; background: linear-gradient(#aaa, #aaa) 0 0 / 1px 100% no-repeat; }
.tree li:last-child { background-size: 1px 7px; }
.tree li::before { content: ""; width: 8px; height: 8px; margin-right: 3px; border-bottom: 1px dotted #888; flex: none; }
.tree b { font-weight: 400; background: #d9d9d9; padding-right: 4px; }
.hscroll { display: flex; align-items: center; height: 16px; padding: 0 5px; background: #f0f0f0; color: #505050; flex: none; }
.hscroll svg { width: 8px; height: 10px; }
.hscroll i { height: 16px; margin: 0 auto 0 5px; background: #cdcdcd; }
.t17 { width: 17px; }
.t84 { width: 84px; }
.t126 { width: 126px; }
.foottabs { position: relative; display: flex; gap: 9px; height: 18px; padding-left: 14px; margin-bottom: 1px; }
.foottabs svg { position: absolute; left: 0; top: 0; width: 110px; height: 17px; }
.foottabs button { position: relative; }
.splitter { display: flex; align-items: center; width: 7px; flex: none; }
.splitter i { width: 6px; height: 100px; border: 1px solid #777; }

.work { display: flex; flex-direction: column; flex: 1; min-width: 0; }
.work > .toolrow { padding-left: 2px; margin-bottom: 1px; }
.gridbox { display: flex; flex-direction: column; height: 272px; border: 1px solid #a0a0a0; padding: 1px 2px 1px 1px; flex: none; }
.gridview { display: flex; height: 252px; gap: 2px; }
.gridbox .hscroll { margin-top: 1px; padding-right: 20px; }
.vscroll { display: flex; flex-direction: column; align-items: center; justify-content: space-between; width: 15px; color: #505050; padding: 5px 0; flex: none; }
.vscroll svg { width: 10px; height: 8px; }
.vscroll .up { transform: scaleY(-1); }
.vscroll i { width: 15px; height: 17px; margin: 4px 0 auto; background: #cdcdcd; }

.grid { table-layout: fixed; border-collapse: separate; border-spacing: 0; line-height: 14px; white-space: nowrap; background: #fff; width: 100%; }
.grid th, .grid td { padding: 0 3px; border-right: 1px solid #b8b8b8; border-bottom: 1px solid #b8b8b8; overflow: hidden; font-weight: 400; }
.grid th { text-align: center; background: #f0f0f0; }
.grid thead th { height: 21px; padding-top: 1px; background: linear-gradient(#f2f2f2, #ececec); }
.grid thead .hot { background: linear-gradient(#fad9a0, #f3c267); }
.grid .hot2 { background: #fdcf85; }
.grid .r { text-align: right; }
.grid .c { text-align: center; }
.grid .top { vertical-align: top; padding-top: 1px; }
.r19 { height: 19px; }
.r29 { height: 29px; }
.r113 { height: 113px; }
.r69 { height: 69px; }
.lite td { background: #e1f2fe; }
.lite .cell-sel { background: #bfe0fa; }
.blue td { background: #a9dbfb; vertical-align: bottom; border-bottom: 0; }
.blue th { vertical-align: bottom; border-bottom: 0; }
.grid .cell-cur { background: #d9e9f8; }
.m { display: inline-block; width: 13px; height: 13px; margin-right: 4px; vertical-align: middle; }
.sub { background: linear-gradient(#b8b8b8, #b8b8b8) 8px 0 / 1px 100% no-repeat, linear-gradient(#b8b8b8, #b8b8b8) 18px 100% / 1px 50% no-repeat; }
.grid .sub, .grid .sub2 { padding-left: 12px; }
.w23 { width: 23px; } .w34 { width: 34px; } .w39 { width: 39px; } .w41 { width: 41px; } .w42 { width: 42px; }
.w55 { width: 55px; } .w57 { width: 57px; } .w62 { width: 62px; } .w65 { width: 65px; } .w75 { width: 75px; }
.w79 { width: 79px; } .w81 { width: 81px; } .w125 { width: 125px; } .w228 { width: 228px; } .w268 { width: 268px; }

.lower { display: flex; flex: 1; min-height: 0; padding-bottom: 3px; gap: 3px; }
.lowleft { display: flex; flex-direction: column; flex: 1; padding-top: 10px; }
.lowleft h2 { padding-left: 8px; margin-bottom: 4px; }
.resbox { flex: 1; border: 1px solid #a0a0a0; padding: 1px; background: #fff; }
.reshead { height: 19px; background: #f0f0f0; border-bottom: 1px solid #b8b8b8; }
.reshead i { display: block; width: 21px; height: 18px; border-right: 1px solid #b8b8b8; }
.lowmid { width: 167px; margin-top: 30px; border: 1px solid #a0a0a0; background: #fff; }
.opts { width: 155px; padding: 38px 10px 0 8px; }
.opts fieldset { margin: 0 0 9px; padding: 6px 6px 3px 8px; border: 1px solid #dcdcdc; min-width: 0; }
.opts legend { padding: 0 2px; }
.opts label { display: flex; align-items: center; gap: 8px; height: 23px; white-space: nowrap; }
.opts input { margin: 0 0 0 -8px; width: 13px; height: 13px; }
.opts > button { display: block; width: 74px; height: 23px; margin-bottom: 8px; background: #ccc; border: 1px solid #bfbfbf; color: #838383; }

.status { display: flex; height: 20px; gap: 1px; flex: none; }
.status > span { border: 1px solid #d4d4d4; background: linear-gradient(#fff, #f0f0f0); padding-left: 1px; line-height: 18px; white-space: nowrap; overflow: hidden; }
.s383 { width: 383px; } .s230 { width: 230px; } .s178 { width: 178px; } .rest { flex: 1; }

.taskbar { display: flex; height: 40px; background: #020c11; color: #fff; flex: none; }
.taskbar > button { width: 50px; display: grid; place-items: center; }
.taskbar > button svg { width: 24px; height: 24px; }
.taskbar > button .w28 { width: 28px; height: 28px; }
.taskbar > .start { width: 48px; background: #000; }
.taskbar > .start svg { width: 16px; height: 16px; }
.search { display: flex; align-items: center; width: 343px; padding: 0 13px 0 9px; background: #333; }
.search .ring { width: 22px; height: 22px; }
.search input { flex: 1; min-width: 0; border: 0; background: none; padding: 0 0 0 5px; outline: 0; font-size: 14px; }
.search input::placeholder { color: #8e8e8e; font-size: 14px; }
.smic { width: 12px; height: 18px; }
.taskbar .run { background: linear-gradient(#76b9ed, #76b9ed) center bottom / 40px 3px no-repeat; }
.taskbar .active { background: linear-gradient(#76b9ed, #76b9ed) center bottom / 48px 3px no-repeat, linear-gradient(#333c40, #333c40) center / 48px 100% no-repeat; }
.tray { display: flex; align-items: center; gap: 10px; margin-left: auto; padding-right: 17px; }
.tray svg { width: 12px; height: 16px; }
.tray .w14 { width: 14px; } .tray .w16 { width: 16px; } .tray .w24 { width: 24px; }
.tray time { width: 68px; text-align: center; line-height: 19px; white-space: nowrap; }
.tray .note { width: 24px; height: 30px; margin-left: 6px; }

.dialog { position: absolute; left: 255px; top: 159px; width: 987px; height: 514px; display: flex; flex-direction: column; border: 1px solid #2d8ceb; background: #efefef; box-shadow: 0 2px 18px rgba(0, 0, 0, .4); overflow: hidden; }
.dtitle { display: flex; align-items: center; height: 30px; padding-left: 8px; gap: 5px; background: #fff; flex: none; }
.dtools { display: flex; height: 27px; flex: none; }
.dt { height: 21px; padding: 0 11px 0 10px; border-right: 1px solid #a0a0a0; }
.dt:nth-child(1) { padding: 0 12px 0 7px; }
.dt:nth-child(2) { padding: 0 17px 0 10px; }
.dt:nth-child(3) { padding: 0 5px 0 4px; }
.pressed { display: block; width: 42px; height: 20px; padding: 1px 0 0 4px; border: 1px solid #fff; border-top: 2px solid #888; border-left: 2px solid #888; background: #f7f7f7; text-align: left; }
.dact { display: flex; gap: 4px; margin-left: auto; margin-right: -3px; padding-top: 3px; }
.dact button { width: 73px; height: 23px; background: #ccc; border: 1px solid #bfbfbf; color: #838383; }
.dbody { display: flex; flex: 1; min-height: 0; }
.dleft { display: flex; flex-direction: column; width: 219px; padding: 0 4px 1px 0; flex: none; }
.combo { position: relative; width: 216px; flex: none; }
.combo select { display: block; height: 20px; width: 100%; border: 1px solid #adadad; border-radius: 0; padding: 0 12px 0 2px; appearance: none; background: #e1e1e1; }
.combo svg { position: absolute; right: 4px; top: 7px; width: 10px; height: 8px; pointer-events: none; }
.dtabs { display: flex; align-items: flex-end; height: 23px; margin-top: 1px; flex: none; }
.dtabs button { height: 19px; padding: 0 4px; border: 1px solid #dcdcdc; border-left: 0; }
.dtabs .sel { height: 21px; padding: 0 7px; background: #fff; border-bottom: 0; }
.dpane { display: flex; flex-direction: column; flex: 1; min-height: 0; padding: 2px 3px 2px 4px; background: #fff; border: 1px solid #dcdcdc; border-left: 0; }
.dtreebox { display: flex; flex-direction: column; flex: 1; min-height: 0; width: 208px; border: 1px solid #828790; padding: 1px; background: #fff; }
.dtree { flex: 1; overflow: hidden; padding-left: 5px; white-space: nowrap; }
.dtree div { display: flex; align-items: center; height: 16px; }
.dtree div > svg { margin-right: 8px; }
.sh { width: 8px; height: 10px; margin-left: 2px; color: #a6a6a6; }
.dtree .op { width: 10px; height: 8px; margin-left: 1px; margin-right: 7px; color: #404040; }
.dtree ul { margin-left: 6px; padding-left: 12px; border-left: 1px dotted transparent; }
.dtree li:not(:last-child) > ul { border-left-color: #888; }
.leaf::before { content: ""; width: 10px; height: 8px; margin: 0 2px 8px 6px; border-left: 1px dotted #888; border-bottom: 1px dotted #888; flex: none; }
.leaf.more { background: repeating-linear-gradient(#888 0 1px, transparent 1px 2px) 6px 0 / 1px 100% no-repeat; }
.dtree mark { background: #cce8ff; color: inherit; width: 160px; margin-left: -3px; padding-left: 3px; }
.radios { display: flex; align-items: center; gap: 20px; height: 36px; margin-top: 2px; padding-left: 11px; background: #efefef; flex: none; }
.radios label { display: flex; align-items: center; gap: 9px; white-space: nowrap; }
.radios input { appearance: none; width: 11px; height: 11px; margin: 0; border: 1px solid #888; border-radius: 50%; background: #fff; flex: none; }
.radios input:checked { background: radial-gradient(#000 0 2px, #fff 3px); }
.dright { flex: 1; min-width: 0; border: 1px solid #a0a0a0; margin: 0 1px 1px 0; padding: 1px; background: #fff; }
.quota { width: 554px; }
.grid .wrap { line-height: 12px; padding: 0 2px; }

.ime { position: absolute; display: flex; align-items: center; gap: 7px; height: 24px; padding: 0 4px 0 0; border: 1px solid #a9bccb; background: #fff; color: #1f74c9; }
.ime.one { left: 670px; top: 25px; }
.ime.two { left: 736px; top: 101px; }
.ime svg { width: 15px; height: 15px; }
.ime .logo { width: 26px; height: 26px; margin: -2px -2px 0 -8px; }
.ime b { font-size: 15px; line-height: 20px; }
.ball { position: absolute; left: 1091px; top: -29px; width: 48px; height: 48px; border-radius: 50%; border: 2px solid #a9b5ab; background: #38bf5a; color: #fff; font-weight: 700; text-align: center; padding-top: 26px; box-shadow: 0 2px 8px rgba(0, 0, 0, .4); font-size: 13px; }
.marks { position: absolute; left: 0; top: 0; pointer-events: none; }
```
